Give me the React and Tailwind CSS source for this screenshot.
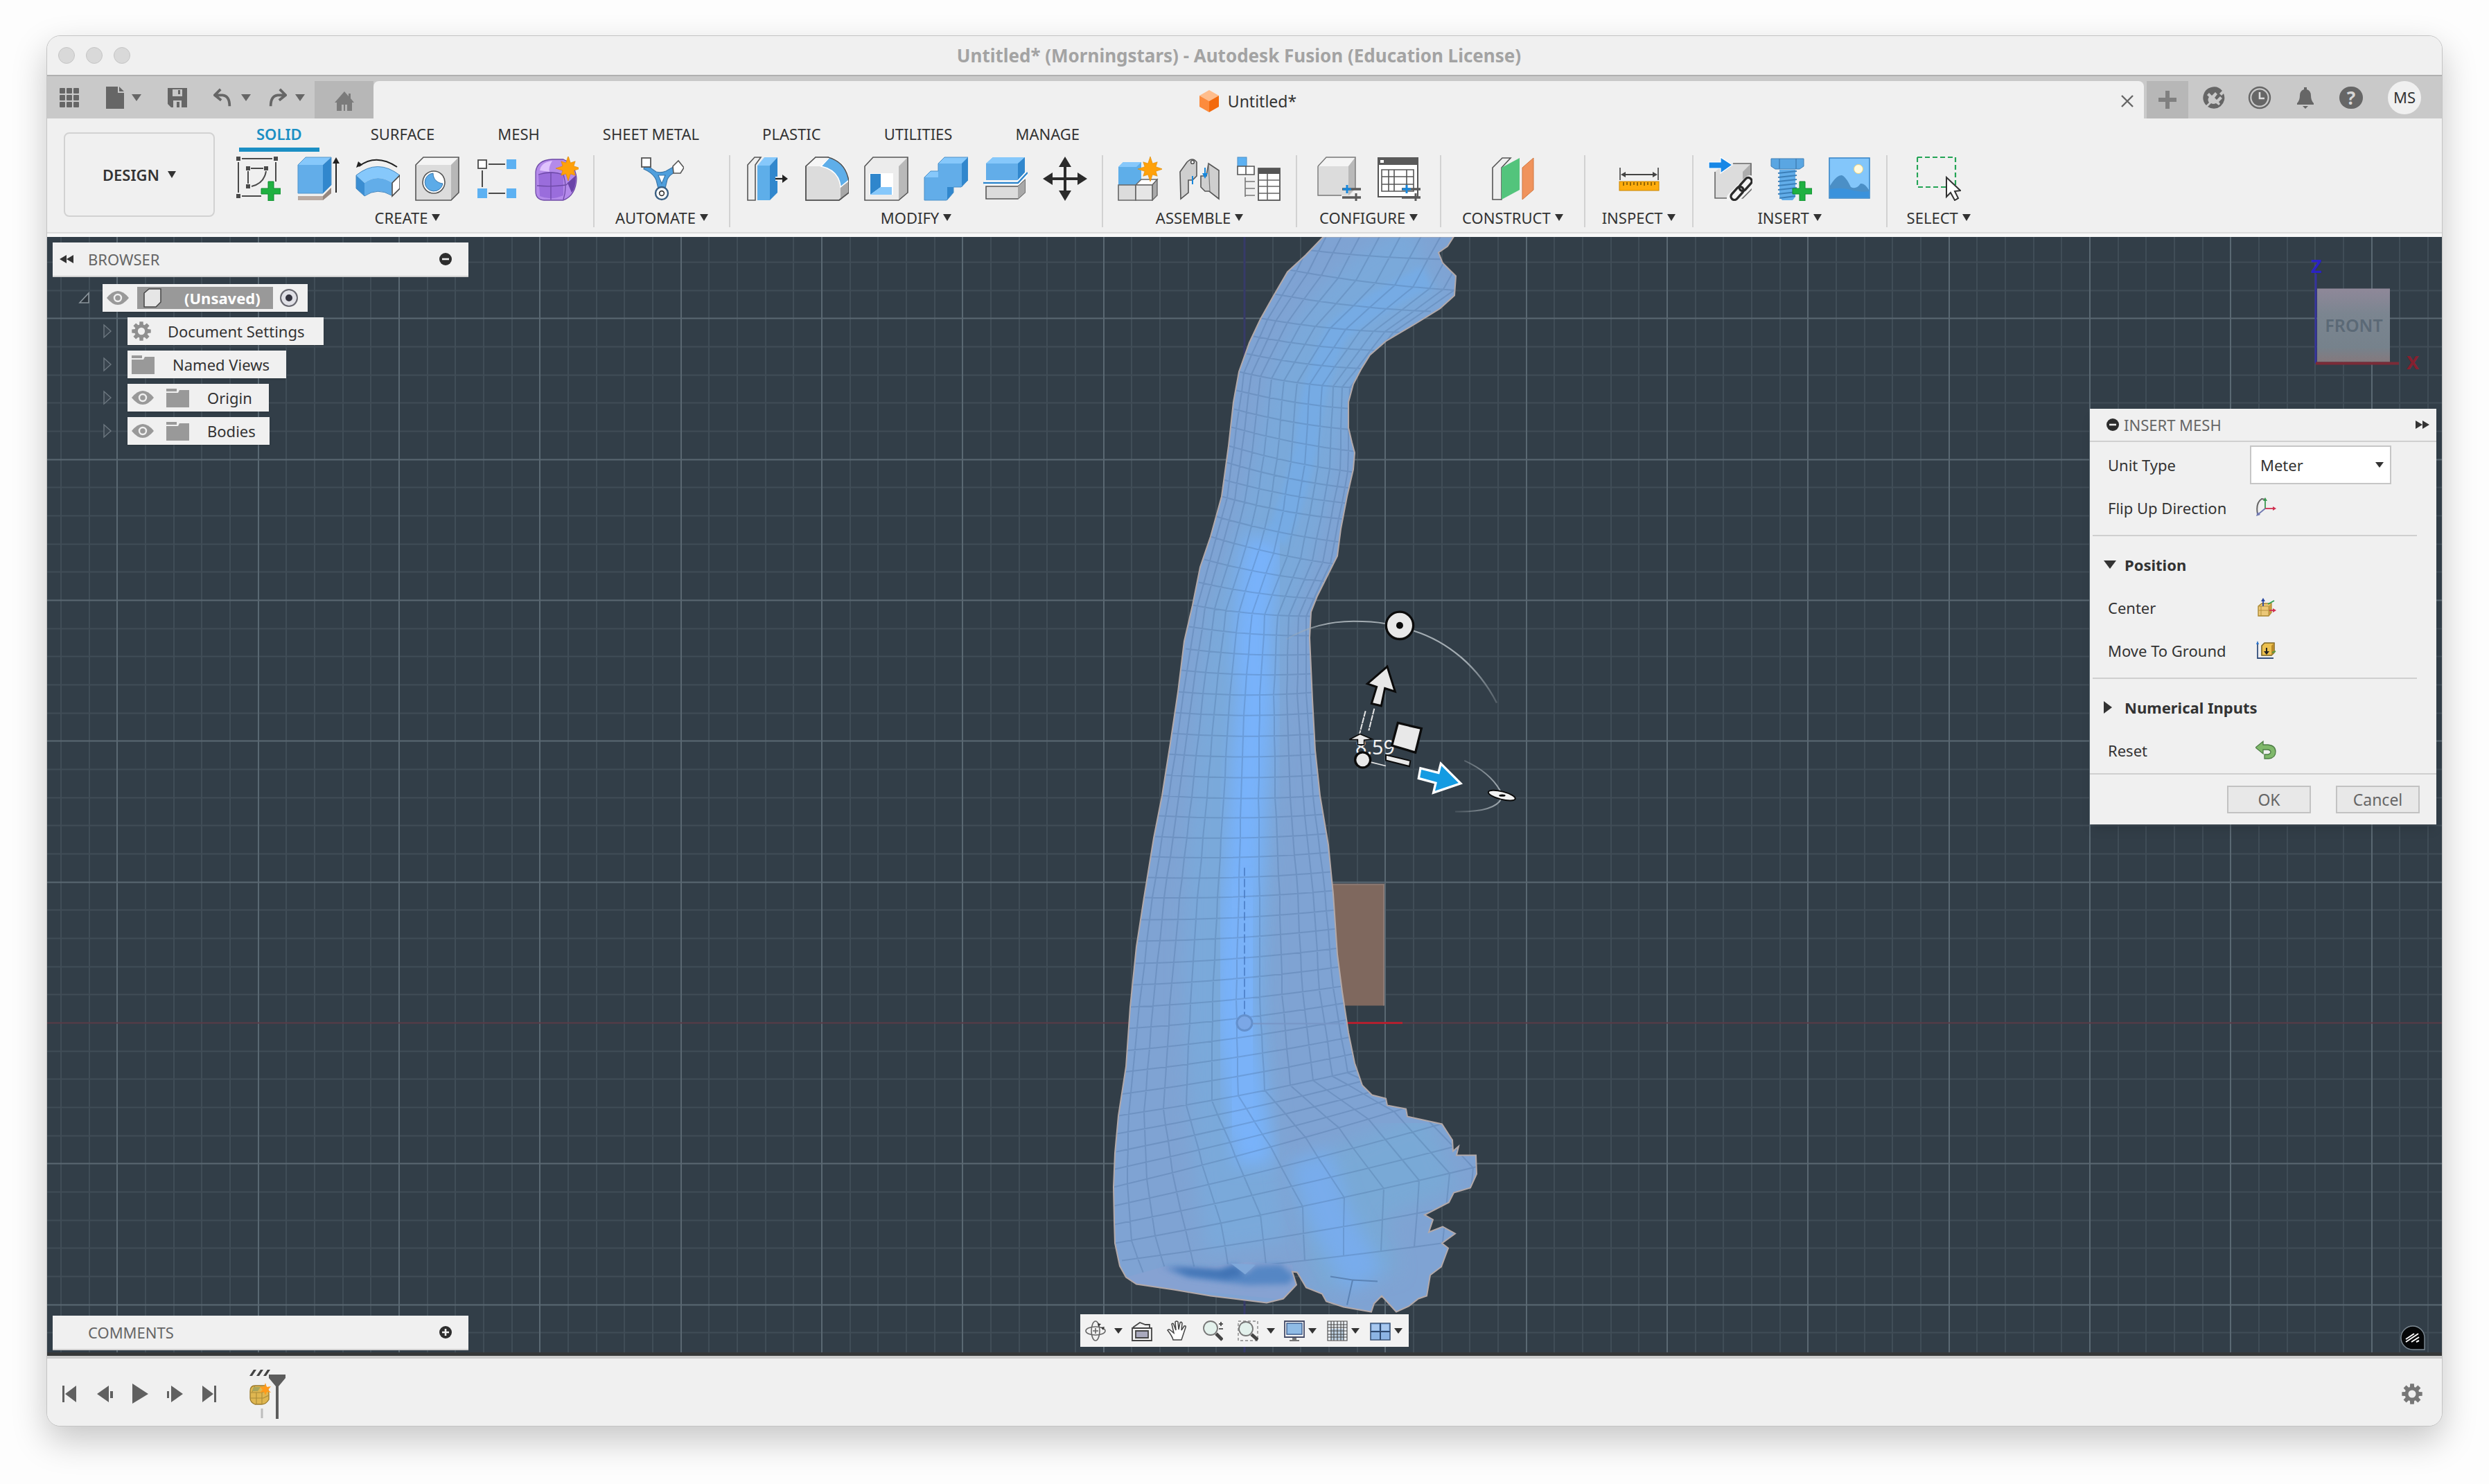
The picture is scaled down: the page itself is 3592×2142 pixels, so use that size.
import React from "react";

const INK = "#4a4a4a";

function Caret({ className = "h-[10px] w-3", fill = "#333" }) {
  return (
    <svg viewBox="0 0 12 10" preserveAspectRatio="none" className={"shrink-0 " + className} aria-hidden="true">
      <path d="M0 0H12L6 10Z" fill={fill} />
    </svg>
  );
}

function Icon({ size = 64, className = "h-16 w-16", children }) {
  return (
    <svg viewBox={`0 0 ${size} ${size}`} className={"shrink-0 " + className} fill="none" aria-hidden="true">
      {children}
    </svg>
  );
}

const dots = (pts, r = 3) =>
  pts.map(([x, y], i) => <rect key={i} x={x - r} y={y - r} width={2 * r} height={2 * r} fill={INK} />);

const star = (cx, cy, r) => {
  const pts = [];
  for (let i = 0; i < 16; i++) {
    const a = (Math.PI * i) / 8 - Math.PI / 2;
    const q = i % 2 ? r * 0.48 : i % 4 ? r * 0.8 : r;
    pts.push(`${(cx + q * Math.cos(a)).toFixed(1)},${(cy + q * Math.sin(a)).toFixed(1)}`);
  }
  return <polygon points={pts.join(" ")} fill="#ffa10a" stroke="#d98600" strokeWidth="0.6" />;
};

const plus = (cx, cy, a = 14, t = 4) => (
  <path
    d={`M${cx - t} ${cy - a}h${2 * t}v${a - t}h${a - t}v${2 * t}h${t - a}v${a - t}h${-2 * t}v${t - a}h${t - a}v${-2 * t}h${a - t}z`}
    fill="#1fb141"
    stroke="#118a30"
    strokeWidth="1"
  />
);

const sliders = (x, y) => (
  <g>
    <path d={`M${x} ${y}h28M${x} ${y + 12}h28`} stroke="#5a5a5a" strokeWidth="3.5" />
    <path d={`M${x + 7} ${y - 6}v12M${x + 1} ${y}h12`} stroke="#1787dc" strokeWidth="3" />
    <path d={`M${x + 20} ${y + 6}v12`} stroke="#5a5a5a" strokeWidth="3" />
  </g>
);

const SketchIcon = () => (
  <Icon>
    <path d="M8 3H52M3 8V52M57 8V36M8 57H36M21 17H39M17 21V39M43 21Q40 39 22 43" stroke={INK} strokeWidth="2" />
    {dots([[3, 3], [57, 3], [3, 57], [17, 17], [43, 17], [17, 43]])}
    {plus(50, 50)}
  </Icon>
);
const ExtrudeIcon = () => (
  <Icon>
    <path d="M3 57H39L51 45V53L39 63H3Z" fill="#b9aaa2" />
    <path d="M39 57L51 45V53L39 63Z" fill="#96877f" />
    <path d="M3 12H39V53H3Z" fill="#62ade9" />
    <path d="M3 12L14 1H51L39 12Z" fill="#86c8fb" />
    <path d="M39 12L51 1V41L39 53Z" fill="#3187cd" />
    <path d="M3 12L14 1H51V41L39 53H3Z" stroke="#5596cb" strokeWidth="1" />
    <path d="M58 52V8" stroke="#222" strokeWidth="2" />
    <path d="M58 1L63 10H53Z" fill="#222" />
  </Icon>
);
const RevolveIcon = () => (
  <Icon>
    <path d="M5 14Q30 -5 60 15" stroke="#222" strokeWidth="2" />
    <path d="M1 16L4 7L10 12Z" fill="#222" />
    <path d="M1 27Q32 2 64 27L53 38Q32 24 13 38Z" fill="#86c8fb" />
    <path d="M13 38Q32 24 53 38L52 56Q32 44 13 57Z" fill="#62ade9" />
    <path d="M1 27L13 38V57L1 46Z" fill="#3b8ed2" />
    <path d="M1 27Q32 2 64 27M1 27V46L13 57Q32 44 52 56" stroke="#4688bf" strokeWidth="1" />
    <path d="M53 38L64 27V46L53 57Z" fill="#fff" stroke={INK} strokeWidth="1.6" />
  </Icon>
);
const HoleIcon = () => (
  <Icon>
    <path d="M1 12L12 1H63V52L52 63H1Z" fill="#dcdcdc" />
    <path d="M1 12L12 1H63L52 12Z" fill="#f5f5f5" />
    <path d="M52 12L63 1V52L52 63Z" fill="#b7b7b7" />
    <path d="M1 12L12 1H63V52L52 63H1Z" stroke="#555" strokeWidth="1.6" />
    <circle cx="27" cy="37" r="16" fill="#fff" stroke="#555" strokeWidth="1.6" />
    <path d="M26 24C26 33 32 38 40 39A13 13 0 1 1 26 24Z" fill="#5cabe8" stroke="#3a78ac" strokeWidth="1" />
  </Icon>
);
const PatternIcon = () => (
  <Icon>
    <path d="M20 11H44M11 20V44M20 53H44" stroke={INK} strokeWidth="2" />
    <rect x="5" y="5" width="12" height="12" fill="#fff" stroke={INK} strokeWidth="1.8" />
    <rect x="46" y="4" width="14" height="14" fill="#5db1f2" />
    <rect x="4" y="46" width="14" height="14" fill="#5db1f2" />
    <rect x="46" y="46" width="14" height="14" fill="#5db1f2" />
  </Icon>
);
const FormIcon = () => (
  <Icon>
    <path d="M2 22Q4 5 26 4H42Q60 12 61 32Q60 56 42 63H14Q2 62 2 50Z" fill="#b48aea" />
    <path d="M6 26Q20 18 42 26V56Q24 64 8 57Z" fill="#9a6ddc" />
    <path d="M8 20Q10 8 26 6Q20 16 22 22Z" fill="#dfc2fd" />
    <path d="M48 38L60 28Q60 46 54 52Z" fill="#6a44a8" />
    <path d="M2 22Q4 5 26 4H42Q60 12 61 32Q60 56 42 63H14Q2 62 2 50ZM4 42Q26 44 46 41L60 28M24 23V62M6 26Q24 20 42 26Q48 44 42 62" stroke="#6d49a6" strokeWidth="1.3" />
    {star(49, 17, 18)}
  </Icon>
);
const AutomateIcon = () => (
  <Icon>
    <path d="M8 11L24 22Q31 24 38 21L52 13L58 20Q44 24 40 33L36 50H28L24 34Q20 24 6 18Z" fill="#4f9fdd" stroke="#3a77aa" strokeWidth="1.2" />
    <path d="M27 27H37L32 39Z" fill="#fff" stroke="#3a77aa" strokeWidth="1.2" />
    <rect x="3" y="2" width="13" height="13" fill="#fff" stroke="#555" strokeWidth="1.8" />
    <path d="M56 6L64 16L59 24H49L48 14Z" fill="#fff" stroke="#555" strokeWidth="1.6" />
    <circle cx="32" cy="53" r="9" fill="#fff" stroke="#3a5f82" strokeWidth="2.4" />
    <circle cx="32" cy="53" r="3.4" fill="#fff" stroke="#333" strokeWidth="1.6" />
  </Icon>
);
const PressPullIcon = () => (
  <Icon>
    <path d="M4 12L14 1H23L15 12V63H4Z" fill="#eee" stroke="#555" strokeWidth="1.6" />
    <path d="M18 13H36V63H18Z" fill="#5eaee9" />
    <path d="M18 13L28 1H47L36 13Z" fill="#86c8fb" />
    <path d="M36 13L47 1V52L36 63Z" fill="#3187cd" />
    <path d="M44 32H54" stroke="#fff" strokeWidth="6" />
    <path d="M44 32H56" stroke="#222" strokeWidth="2.4" />
    <path d="M62 32L54 26V38Z" fill="#222" />
  </Icon>
);
const FilletIcon = () => (
  <Icon>
    <path d="M2 14L16 1H34Q60 8 64 36V52L50 63H2Z" fill="#dcdcdc" stroke="#555" strokeWidth="1.6" />
    <path d="M2 14L16 1H34L24 14Z" fill="#f6f6f6" />
    <path d="M52 44L64 36V52L52 63Z" fill="#a8a8a8" />
    <path d="M24 14L36 1Q61 8 64 34L52 44Q50 20 24 14Z" fill="#5eaee9" stroke="#fff" strokeWidth="1.6" />
    <path d="M2 14L16 1H34Q60 8 64 36V52L50 63H2Z" stroke="#555" strokeWidth="1.6" />
  </Icon>
);
const ShellIcon = () => (
  <Icon>
    <path d="M1 14L13 1H63V52L50 63H1Z" fill="#ececec" />
    <path d="M50 14L63 1V52L50 63Z" fill="#b9b9b9" />
    <path d="M1 14L13 1H63V52L50 63H1Z" stroke="#555" strokeWidth="1.6" />
    <path d="M8 24H42V55H8Z" fill="#fff" />
    <path d="M9 25H24V44L9 55Z" fill="#2f86cc" />
    <path d="M24 44H40V55H9Z" fill="#86c8fb" />
  </Icon>
);
const CombineIcon = () => (
  <Icon>
    <path d="M1 30L10 21H21V10L30 1H64V34L54 44H43V52L33 63H1Z" fill="#62ade9" />
    <path d="M21 10L30 1H64L55 10Z" fill="#86c8fb" />
    <path d="M55 10L64 1V34L55 44ZM34 44H43V52L34 63Z" fill="#3187cd" />
    <path d="M1 30L10 21H21V30Z" fill="#86c8fb" />
    <path d="M1 30L10 21H21V10L30 1H64V34L54 44H43V52L33 63H1Z" stroke="#4b8fc7" strokeWidth="1" />
  </Icon>
);
const SplitIcon = () => (
  <Icon>
    <path d="M4 10L14 1H60V24L50 34H4Z" fill="#62ade9" />
    <path d="M4 10L14 1H60L50 10Z" fill="#86c8fb" />
    <path d="M50 10L60 1V24L50 34Z" fill="#3187cd" />
    <path d="M4 43H50L60 34V52L50 61H4Z" fill="#dcdcdc" stroke="#555" strokeWidth="1.6" />
    <path d="M50 43L60 34V52L50 61Z" fill="#a8a8a8" />
    <path d="M1 38H50L63 24" stroke="#fff" strokeWidth="6" />
    <path d="M0 38H50L64 23" stroke="#2f86cc" strokeWidth="2.4" />
  </Icon>
);
const MoveIcon = () => (
  <Icon>
    <path d="M32 8V56M8 32H56" stroke="#2b2b2b" strokeWidth="4" />
    <path d="M32 0L41 15H23ZM32 64L41 49H23ZM0 32L14 23V41ZM64 32L50 23V41Z" fill="#2b2b2b" />
  </Icon>
);
const ComponentIcon = () => (
  <Icon>
    <path d="M1 15L8 8H34V34L27 41H1Z" fill="#5eaee9" />
    <path d="M1 15L8 8H34L27 15Z" fill="#86c8fb" />
    <path d="M1 41H26V63H1Z" fill="#dcdcdc" stroke="#666" strokeWidth="1.6" />
    <path d="M26 41L34 33H57L50 41Z" fill="#fff" stroke="#666" strokeWidth="1.4" />
    <path d="M50 41L57 33V56L50 63Z" fill="#aaa" stroke="#666" strokeWidth="1.4" />
    <path d="M26 41H50V63H26Z" fill="#e6e6e6" stroke="#666" strokeWidth="1.6" />
    {star(47, 18, 18)}
  </Icon>
);
const JointIcon = () => (
  <Icon>
    <path d="M4 22L14 8Q22 0 28 8V28L22 34H16V52L5 61Z" fill="#cfcfcf" stroke="#555" strokeWidth="1.6" />
    <circle cx="22" cy="8" r="2.4" fill="#fff" stroke="#444" strokeWidth="1.4" />
    <path d="M45 10L60 20V61L46 50H40L34 44V28H42Z" fill="#cfcfcf" stroke="#555" strokeWidth="1.6" />
    <path d="M45 10L47 50" stroke="#777" strokeWidth="1.2" />
    <path d="M22 40V28M40 16V28" stroke="#1787dc" strokeWidth="2" />
    <path d="M40 32L36 24H44Z" fill="#1787dc" />
  </Icon>
);
const BomIcon = () => (
  <Icon>
    <rect x="1" y="1" width="13" height="13" fill="#5db1f2" stroke="#4b8fc7" />
    <path d="M1 14H25V26H1ZM13 14V26" fill="#fff" stroke="#555" strokeWidth="1.6" />
    <path d="M12 30V58M12 36H26M12 46H26M12 56H26" stroke="#777" strokeWidth="1.6" />
    <rect x="31" y="17" width="31" height="46" fill="#fff" stroke="#555" strokeWidth="1.8" />
    <path d="M31 17H62V25H31Z" fill="#555" />
    <path d="M31 34H62M31 43H62M31 53H62M44 25V63" stroke="#666" strokeWidth="1.6" />
  </Icon>
);
const ConfigureIcon = () => (
  <Icon>
    <path d="M2 14L14 1H56V46L48 56H2Z" fill="#dcdcdc" />
    <path d="M2 14L14 1H56L46 14Z" fill="#f4f4f4" />
    <path d="M46 14L56 1V46L46 56Z" fill="#b9b9b9" />
    <path d="M2 14L14 1H56V46M2 14V56H36" stroke="#777" strokeWidth="1.4" />
    {sliders(37, 47)}
  </Icon>
);
const ConfigTableIcon = () => (
  <Icon>
    <rect x="3" y="2" width="57" height="56" fill="#fff" stroke="#555" strokeWidth="2" />
    <path d="M3 1H60V12H3Z" fill="#5a5a5a" />
    <rect x="6" y="5" width="5" height="4" fill="#fff" />
    <path d="M8 19H54V50H8ZM8 29H54M8 40H54M18 19V50M26 19V50M44 19V50" stroke="#555" strokeWidth="1.6" />
    {sliders(37, 47)}
  </Icon>
);
const PlaneIcon = () => (
  <Icon>
    <path d="M3 16L17 2H29L16 16V62H3Z" fill="#efefef" stroke="#555" strokeWidth="1.6" />
    <path d="M16 16L42 2V48L16 62Z" fill="#53c47c" />
    <path d="M46 16L62 2V48L46 62Z" fill="#f0935c" stroke="#d2773f" strokeWidth="1" />
  </Icon>
);
const MeasureIcon = () => (
  <Icon>
    <path d="M5 16V34M60 16V34" stroke="#444" strokeWidth="1.6" />
    <path d="M10 26H55" stroke="#444" strokeWidth="2" />
    <path d="M6 26L13 22V30ZM59 26L52 22V30Z" fill="#444" />
    <rect x="4" y="36" width="57" height="13" fill="#ffad0d" stroke="#c98500" strokeWidth="1" />
    <path d="M10 37V42M15 37V41M20 37V42M25 37V41M30 37V42M35 37V41M40 37V42M45 37V41M50 37V42M55 37V41" stroke="#6b4a00" strokeWidth="1.4" />
  </Icon>
);
const InsertDeriveIcon = () => (
  <Icon>
    <path d="M10 22L24 10H62V48L50 60H10Z" fill="#dcdcdc" />
    <path d="M50 22L62 10V48L50 60Z" fill="#adadad" />
    <path d="M36 10H62V48L50 60H10V22" stroke="#666" strokeWidth="1.6" />
    <path d="M1 8H18V1L35 12L18 24V17H1Z" fill="#1787e6" stroke="#fff" strokeWidth="1.2" />
    <path d="M36 60L60 36" stroke="#f4f4f4" strokeWidth="18" strokeLinecap="round" />
    <rect x="31" y="48" width="22" height="10" rx="5" transform="rotate(-48 42 53)" stroke="#2b2b2b" strokeWidth="3.4" />
    <rect x="43" y="35" width="22" height="10" rx="5" transform="rotate(-48 54 40)" stroke="#2b2b2b" strokeWidth="3.4" />
  </Icon>
);
const BoltIcon = () => (
  <Icon>
    <path d="M5 3H52V14L46 18H11L5 14Z" fill="#5aa6e2" stroke="#3f7fb5" strokeWidth="1" />
    <path d="M17 3V18M41 3V18" stroke="#3f7fb5" strokeWidth="1.4" />
    <path d="M17 19H40V58L36 63H21L17 58Z" fill="#62ade9" />
    <path d="M15 24L42 21M15 30L42 27M15 36L42 33M15 42L42 39M15 48L42 45M15 54L42 51M17 60L40 57" stroke="#3b7fb9" strokeWidth="2" />
    {plus(50, 50)}
  </Icon>
);
const CanvasIcon = () => (
  <Icon>
    <rect x="3" y="2" width="58" height="58" fill="#83c6fa" stroke="#3b88c9" strokeWidth="1.6" />
    <circle cx="45" cy="18" r="6.5" fill="#fffbe0" stroke="#efd27a" />
    <path d="M4 42Q14 26 21 27Q27 29 34 44Q42 48 48 39Q54 38 60 48V59H4Z" fill="#4b8fc6" />
    <path d="M4 47Q20 44 34 48Q50 52 60 50V59H4Z" fill="#3a92dc" />
  </Icon>
);
const SelectIcon = () => (
  <Icon>
    <path d="M1 1H56V44M1 1V44H44" stroke="#23a455" strokeWidth="2.2" strokeDasharray="7 4" />
    <path d="M43 30V58L49 52L55 63L60 60L55 50L63 49Z" fill="#fff" stroke="#333" strokeWidth="2" />
  </Icon>
);

const GROUPS = [
  { name: "CREATE", pad: "px-[10px]", icons: [["Create Sketch", SketchIcon], ["Extrude", ExtrudeIcon], ["Revolve", RevolveIcon], ["Hole", HoleIcon], ["Rectangular Pattern", PatternIcon], ["Create Form", FormIcon]] },
  { name: "AUTOMATE", pad: "px-[30px]", icons: [["Automated Modeling", AutomateIcon]] },
  { name: "MODIFY", pad: "px-[10px]", icons: [["Press Pull", PressPullIcon], ["Fillet", FilletIcon], ["Shell", ShellIcon], ["Combine", CombineIcon], ["Split Body", SplitIcon], ["Move", MoveIcon]] },
  { name: "ASSEMBLE", pad: "px-[10px]", icons: [["New Component", ComponentIcon], ["Joint", JointIcon], ["Bill of Materials", BomIcon]] },
  { name: "CONFIGURE", pad: "px-[17px]", icons: [["Configure", ConfigureIcon], ["Configuration Table", ConfigTableIcon]] },
  { name: "CONSTRUCT", pad: "px-[30px]", icons: [["Offset Plane", PlaneIcon]] },
  { name: "INSPECT", pad: "px-6", icons: [["Measure", MeasureIcon]] },
  { name: "INSERT", pad: "px-[10px]", icons: [["Insert Derive", InsertDeriveIcon], ["Insert Fastener", BoltIcon], ["Canvas", CanvasIcon]] },
  { name: "SELECT", pad: "px-7", icons: [["Select", SelectIcon]] },
];

const TABS = ["SOLID", "SURFACE", "MESH", "SHEET METAL", "PLASTIC", "UTILITIES", "MANAGE"];

function TitleBar() {
  return (
    <header className="relative flex h-14 shrink-0 items-center justify-center bg-[#f0f0f0] pr-4">
      <div className="absolute left-4 flex gap-4">
        {["Close window", "Minimize window", "Zoom window"].map((n) => (
          <button key={n} aria-label={n} className="h-6 w-6 rounded-full border border-[#c4c4c4] bg-[#d9d9d9]" />
        ))}
      </div>
      <h1 className="text-[26px] font-bold text-[#a3a3a3]">Untitled* (Morningstars) - Autodesk Fusion (Education License)</h1>
    </header>
  );
}

function TabBar() {
  const c = "#666";
  const undo = "M11 2L2 11L12 19M3 11H14Q25 12 25 28";
  return (
    <div className="flex h-[63px] shrink-0 items-end border-t-2 border-[#b0b0b0] bg-[#c9c9c9]">
      <div className="flex h-full items-center pr-[14px] pl-[18px]">
        <button aria-label="Data panel" className="mr-[39px]">
          <Icon size={28} className="h-7 w-7">
            {[0, 10, 20].map((x) => [0, 10, 20].map((y) => <rect key={x + "-" + y} x={x} y={y} width="8" height="8" rx="1" fill={c} />))}
          </Icon>
        </button>
        <button aria-label="File" className="mr-[38px] flex items-center gap-[11px]">
          <svg viewBox="0 0 26 32" className="h-8 w-[26px]"><path d="M0 0H17V9H26V32H0ZM19 0L26 7H19Z" fill={c} /></svg>
          <Caret className="h-[10px] w-[14px]" fill={c} />
        </button>
        <button aria-label="Save" className="mr-[38px]">
          <Icon size={28} className="h-7 w-7">
            <path d="M0 0H28V28H5L0 23ZM7 2V12H21V2ZM8 18V28H20V18Z" fill={c} fillRule="evenodd" />
            <path d="M15 3H18V9H15ZM13 20H17V28H13Z" fill={c} />
          </Icon>
        </button>
        <div className="flex gap-6">
          <button aria-label="Undo" className="flex items-center gap-3">
            <Icon size={30} className="h-7 w-7"><path d={undo} stroke={c} strokeWidth="4" /></Icon>
            <Caret className="h-[10px] w-[14px]" fill={c} />
          </button>
          <button aria-label="Redo" className="flex items-center gap-3">
            <Icon size={30} className="h-7 w-7"><g transform="translate(30 0) scale(-1 1)"><path d={undo} stroke={c} strokeWidth="4" /></g></Icon>
            <Caret className="h-[10px] w-[14px]" fill={c} />
          </button>
        </div>
      </div>
      <button aria-label="Home" className="flex h-[54px] w-[85px] items-center justify-center bg-[#b7b7b7] pt-1">
        <Icon size={30} className="h-[30px] w-[30px]"><path d="M15 1L21 8V4H24V11L29 17H26V29H19V20H16V29H14V20H11V29H4V17H1Z" fill="#7b7b7b" /></Icon>
      </button>
      <div className="flex h-[54px] flex-1 items-center rounded-t-lg bg-[#f0f0f0] pt-1 pr-3">
        <div className="flex flex-1 items-center justify-center gap-3 pl-1">
          <svg viewBox="0 0 30 32" className="h-8 w-[30px]" aria-hidden="true">
            <path d="M15 0L29 8L15 16L1 8Z" fill="#ffbd8c" />
            <path d="M1 8L15 16V32L1 24Z" fill="#fc8b3d" />
            <path d="M29 8L15 16V32L29 24Z" fill="#f36a0e" />
          </svg>
          <span className="text-[23px] text-[#333]">Untitled*</span>
        </div>
        <button aria-label="Close tab" className="flex h-6 w-6 items-center justify-center">
          <Icon size={18} className="h-[18px] w-[18px]"><path d="M1 1L17 17M17 1L1 17" stroke="#666" strokeWidth="2.4" /></Icon>
        </button>
      </div>
      <button aria-label="New tab" className="mr-5 ml-1 flex h-[54px] w-[60px] items-center justify-center bg-[#b7b7b7]">
        <Icon size={26} className="h-[26px] w-[26px]"><path d="M13 0V26M0 13H26" stroke="#808080" strokeWidth="6" /></Icon>
      </button>
      <div className="flex h-full items-center gap-8 pr-[30px]">
        <button aria-label="Extensions">
          <Icon size={34} className="h-[34px] w-[34px]">
            <path d="M13 2A15.5 15.5 0 0 0 6 28L10 24Q7 20 10 16L7 13L10 10L14 14L19 9L22 12L18 17L21 20L26 15L29 18L24 23L26 26L24 28L20 25Q16 27 13 25L8 30A15.5 15.5 0 0 0 31 11L28 14L25 11L29 7A15.5 15.5 0 0 0 13 2Z" fill={c} />
          </Icon>
        </button>
        <button aria-label="Job status">
          <Icon size={34} className="h-[34px] w-[34px]">
            <circle cx="17" cy="17" r="15" stroke={c} strokeWidth="2.4" />
            <circle cx="17" cy="17" r="11.5" fill={c} />
            <path d="M17 9V18H24" stroke="#dcdcdc" strokeWidth="2.6" />
          </Icon>
        </button>
        <button aria-label="Notifications">
          <Icon size={34} className="h-[34px] w-[34px]"><path d="M15 2H19V5Q25 7 25 14Q25 21 29 25V27H5V25Q9 21 9 14Q9 7 15 5ZM13 29H21L17 33Z" fill={c} /></Icon>
        </button>
        <button aria-label="Help" className="flex h-8 w-[34px] items-center justify-center rounded-full bg-[#666] text-[26px] leading-none font-bold text-[#d6d6d6]">?</button>
        <button className="ml-1 flex h-12 w-12 items-center justify-center rounded-full bg-[#f0f0f0] text-[22px] text-[#333]">MS</button>
      </div>
    </div>
  );
}

function Ribbon() {
  return (
    <div className="flex shrink-0 bg-[#f0f0f0] pb-[7px]">
      <button className="mt-5 mr-[10px] ml-6 flex h-[122px] w-[218px] shrink-0 items-center justify-center gap-3 rounded-lg border-2 border-[#d2d2d2] text-[22px] font-semibold text-[#333]">
        DESIGN
        <Caret />
      </button>
      <div className="min-w-0 flex-1">
        <nav className="flex gap-[41px] pl-[25px]">
          {TABS.map((t, i) => (
            <button
              key={t}
              className={
                "flex h-12 items-center border-b-[6px] px-[25px] pt-0.5 text-[22px] whitespace-nowrap first:mr-2 " +
                (i === 0 ? "border-[#1b8fc4] font-semibold text-[#1b8fc4]" : "border-transparent text-[#333]")
              }
            >
              {t}
            </button>
          ))}
        </nav>
        <div className="mt-[5px] flex">
          {GROUPS.map((g) => (
            <section key={g.name} className={"flex h-[104px] flex-col items-center border-r-2 border-[#d2d2d2] pt-0.5 last:border-0 " + g.pad}>
              <div className="flex">
                {g.icons.map(([label, Glyph]) => (
                  <button key={label} aria-label={label} className="px-[11px]"><Glyph /></button>
                ))}
              </div>
              <button className="mt-2 flex h-8 items-center gap-1.5 text-[22px] text-[#333]">
                {g.name}
                <Caret />
              </button>
            </section>
          ))}
        </div>
      </div>
    </div>
  );
}

const OUTLINE =
  "M1910 342L1884 369L1858 393L1837 429L1819 461L1803 495L1788 537L1780 581L1773 644L1763 717L1747 775L1732 819L1721 874L1709 926L1700 999L1689 1073L1677 1149L1665 1210L1651 1296L1640 1367L1631 1454L1625 1540L1614 1611L1609 1665L1607 1714L1608 1763L1609 1795L1616 1828L1625 1844L1640 1854L1694 1862L1747 1871L1828 1881L1852 1875L1871 1855L1865 1836L1872 1837L1885 1859L1908 1868L1914 1879L1939 1887L1979 1894L1983 1882L1994 1871L2015 1894L2033 1886L2047 1875L2059 1871L2064 1841L2080 1829L2090 1802L2081 1795L2100 1781L2082 1771L2062 1779L2068 1761L2056 1754L2091 1736L2098 1722L2122 1715L2131 1695L2130 1668L2102 1668L2105 1655L2097 1662L2096 1646L2081 1623L2031 1612L2029 1601L2002 1596L2000 1586L1980 1581L1966 1567L1955 1535L1946 1491L1937 1432L1930 1378L1924 1291L1917 1220L1905 1149L1898 1083L1894 1010L1890 921L1892 884L1901 861L1930 803L1935 764L1944 717L1953 678L1955 654L1951 639L1946 618L1946 581L1953 555L1964 534L1977 513L2000 493L2044 467L2078 446L2099 427L2101 399L2082 380L2076 365L2089 356L2098 342Z";

const STATIONS = [
  [1890, 330, 2160, 330], [1860, 390, 2110, 420], [1820, 460, 2020, 480], [1788, 537, 1955, 560], [1773, 644, 1953, 682],
  [1763, 717, 1940, 750], [1747, 775, 1928, 815], [1721, 874, 1892, 890], [1700, 999, 1893, 1000], [1677, 1149, 1905, 1149],
  [1651, 1296, 1924, 1286], [1631, 1454, 1937, 1424], [1614, 1611, 1960, 1545], [1607, 1714, 2060, 1590],
  [1609, 1795, 2150, 1680], [1640, 1870, 2130, 1840],
];

function buildWires() {
  const rows = [];
  for (let i = 0; i < STATIONS.length - 1; i++) {
    const a = STATIONS[i];
    const b = STATIONS[i + 1];
    const n = Math.max(2, Math.round(Math.abs(b[1] - a[1]) / 29));
    for (let k = 0; k < n; k++) rows.push(a.map((v, j) => v + ((b[j] - v) * k) / n));
  }
  const rungs = rows.map(([x1, y1, x2, y2]) => `M${x1.toFixed(0)} ${y1.toFixed(0)}Q${((x1 + x2) / 2).toFixed(0)} ${((y1 + y2) / 2 + 8).toFixed(0)} ${x2.toFixed(0)} ${y2.toFixed(0)}`);
  const rails = [];
  const count = 12;
  for (let u = 1; u < count; u++) {
    const f = 0.6 * ((1 - Math.cos((Math.PI * u) / count)) / 2) + 0.4 * (u / count);
    rails.push("M" + rows.map(([x1, y1, x2, y2]) => `${(x1 + (x2 - x1) * f).toFixed(0)} ${(y1 + (y2 - y1) * f + 16 * f * (1 - f)).toFixed(0)}`).join("L"));
  }
  return rungs.join("") + rails.join("");
}
const WIRES = buildWires();

const GRID_X = Array.from({ length: 87 }, (_, i) => i - 43);
const GRID_Y = Array.from({ length: 41 }, (_, i) => i - 28);
const gx = (i) => Math.round(1796 + i * 40.67);
const gy = (i) => Math.round(1477 + i * 40.67);

function Scene() {
  return (
    <svg viewBox="68 342 3456 1611" preserveAspectRatio="xMidYMid slice" className="absolute inset-0 h-full w-full" role="img" aria-label="Mesh model in front view">
      <defs>
        <clipPath id="body"><path d={OUTLINE} /></clipPath>
        <filter id="soft" x="-50%" y="-20%" width="200%" height="140%"><feGaussianBlur stdDeviation="13" /></filter>
        <filter id="soft2" x="-50%" y="-50%" width="200%" height="200%"><feGaussianBlur stdDeviation="4" /></filter>
        <linearGradient id="cube" x1="0" y1="0" x2="0" y2="1">
          <stop offset="0" stopColor="#8f8899" /><stop offset="0.35" stopColor="#7b8590" /><stop offset="0.8" stopColor="#76828c" /><stop offset="1" stopColor="#85797d" />
        </linearGradient>
        <linearGradient id="ringA" gradientUnits="userSpaceOnUse" x1="50" y1="0" x2="960" y2="0">
          <stop offset="0" stopColor="#a3acb2" stopOpacity="0.2" /><stop offset="0.2" stopColor="#a3acb2" /><stop offset="0.85" stopColor="#a3acb2" /><stop offset="1" stopColor="#a3acb2" stopOpacity="0.3" />
        </linearGradient>
        <linearGradient id="ringB" gradientUnits="userSpaceOnUse" x1="760" y1="0" x2="980" y2="0">
          <stop offset="0" stopColor="#a3acb2" stopOpacity="0.1" /><stop offset="1" stopColor="#a3acb2" />
        </linearGradient>
      </defs>
      <rect x="68" y="342" width="3456" height="1611" fill="#323e48" />
      <g strokeWidth="2" stroke="#404d57">
        {GRID_X.filter((i) => i % 5).map((i) => <path key={"x" + i} d={`M${gx(i)} 342V1953`} />)}
        {GRID_Y.filter((i) => i % 5).map((i) => <path key={"y" + i} d={`M68 ${gy(i)}H3524`} />)}
      </g>
      <g strokeWidth="2" stroke="#5a6872">
        {GRID_X.filter((i) => i % 5 === 0 && i).map((i) => <path key={"X" + i} d={`M${gx(i)} 342V1953`} />)}
        {GRID_Y.filter((i) => i % 5 === 0 && i).map((i) => <path key={"Y" + i} d={`M68 ${gy(i)}H3524`} />)}
      </g>
      <path d="M68 1477H3524" stroke="#5a3b47" strokeWidth="2" />
      <path d="M1796 342V1953" stroke="#373a68" strokeWidth="3" />
      <rect x="1900" y="1277" width="97" height="175" fill="#7f685e" />
      <path d="M1900 1277H1997V1452" fill="none" stroke="#8d7a74" strokeWidth="2" />
      <path d="M1940 1477H2024" stroke="#b2202f" strokeWidth="3" />

      <path d={OUTLINE} fill="#7fa3d3" />
      <g clipPath="url(#body)">
        <path d="M2060 380Q1930 440 1890 560Q1860 740 1800 900Q1770 1200 1770 1400Q1770 1600 1800 1800" fill="none" stroke="#7aa9da" strokeWidth="120" filter="url(#soft)" />
        <path d="M2080 1660L1930 1720L1960 1850" fill="none" stroke="#79a9d6" strokeWidth="120" filter="url(#soft)" />
        <path d="M2060 400Q1960 450 1930 480Q1890 560 1886 640Q1870 720 1840 780" fill="none" stroke="#76abe4" strokeWidth="34" filter="url(#soft2)" />
        <path d="M1825 780Q1800 900 1812 1000Q1800 1150 1795 1250Q1778 1400 1785 1500Q1800 1600 1810 1680" fill="none" stroke="#78b2fb" strokeWidth="52" filter="url(#soft)" />
        <path d="M1788 1280Q1780 1460 1800 1630" fill="none" stroke="#7ab2f8" strokeWidth="96" filter="url(#soft)" />
        <path d="M1890 1670L1920 1760L1970 1850" fill="none" stroke="#78acec" strokeWidth="60" filter="url(#soft)" />
        <path d={WIRES} fill="none" stroke="#4a6d9c" strokeOpacity="0.3" strokeWidth="2" />
        <path d="M1625 1844L1682 1828L1740 1829L1800 1822L1865 1826L1868 1840L1871 1857L1850 1876L1640 1856Z" fill="#86a2d2" />
        <path d="M1676 1829L1760 1834L1782 1826L1797 1840L1812 1828L1848 1826L1868 1842L1860 1854L1800 1855L1715 1844Z" fill="#5586c4" filter="url(#soft2)" />
        <path d="M1690 1830L1760 1835L1782 1828L1797 1840L1770 1846L1715 1840Z" fill="#3f72b4" filter="url(#soft2)" />
        <path d="M1776 1824L1797 1840L1812 1826" fill="#7fa8da" />
        <path d="M1920 1843L1952 1848L1944 1884M1952 1848L1988 1850" fill="none" stroke="#5b83b5" strokeWidth="2" />
      </g>
      <path d={OUTLINE} fill="none" stroke="#b3a9a9" strokeWidth="2" />
      <path d="M1796 1253V1465" stroke="#4a7cc4" strokeOpacity="0.8" strokeWidth="2" strokeDasharray="12 4" />
      <circle cx="1796" cy="1477" r="11" fill="#7ba7e6" stroke="#6490cc" strokeWidth="3" />
      <path d="M1808 1478H1940" stroke="#7795c6" strokeWidth="2" />

      <g transform="translate(1840 860) scale(0.3333)">
        <path d="M50 190Q180 112 340 112Q420 112 480 122" fill="none" stroke="url(#ringA)" strokeWidth="6" />
        <path d="M600 153C750 200 880 310 960 465" fill="none" stroke="url(#ringA)" strokeWidth="7" />
        <path d="M820 715Q930 765 975 845M980 880Q950 940 780 936" fill="none" stroke="url(#ringB)" strokeWidth="6" />
        <path d="M392 500L366 600M430 490L406 585" stroke="#e6e6e6" strokeWidth="6" strokeDasharray="26 3" />
        <path d="M415 722L480 738" stroke="#e6e6e6" strokeWidth="5" />
        <text x="348" y="688" fontSize="86" fill="#f2f2f2" fontFamily="Noto Sans, sans-serif">8.59</text>
        <circle cx="540" cy="130" r="59" fill="#e8e8e8" stroke="#0b0b0b" strokeWidth="10" />
        <circle cx="540" cy="130" r="15" fill="#0b0b0b" />
        <path d="M486 308L520 416L476 402L460 478L418 468L440 396L400 382Z" fill="#e8e8e8" stroke="#0b0b0b" strokeWidth="9" />
        <path d="M322 624L368 600L420 622L386 626V646H358V624Z" fill="#e8e8e8" stroke="#0b0b0b" strokeWidth="5" />
        <path d="M532 552L634 576L608 680L506 650Z" fill="#e8e8e8" stroke="#0b0b0b" strokeWidth="10" />
        <path d="M480 690L586 716L582 740L480 714Z" fill="#e8e8e8" stroke="#0b0b0b" strokeWidth="6" />
        <circle cx="380" cy="712" r="33" fill="#e8e8e8" stroke="#0b0b0b" strokeWidth="10" />
        <path d="M630 748L708 768L718 728L804 814L686 854L696 812L622 792Z" fill="#149be2" stroke="#fff" strokeWidth="10" />
        <ellipse cx="982" cy="866" rx="60" ry="17" transform="rotate(14 982 866)" fill="#f2f2f2" stroke="#0b0b0b" strokeWidth="6" />
        <ellipse cx="984" cy="866" rx="14" ry="5" fill="#0b0b0b" />
      </g>

      <g fontFamily="Noto Sans, sans-serif" fontWeight="700" textAnchor="middle">
        <rect x="3344" y="417" width="105" height="106" fill="url(#cube)" />
        <text x="3397" y="479" fontSize="25" fontWeight="600" fill="#5b6976">FRONT</text>
        <path d="M3342 396V525" stroke="#35339c" strokeWidth="3" />
        <path d="M3342 525H3462" stroke="#7b2b37" strokeWidth="4" />
        <text x="3343" y="394" fontSize="27" fill="#2a22c4">Z</text>
        <text x="3482" y="533" fontSize="27" fill="#86202f">X</text>
      </g>
    </svg>
  );
}

const Eye = () => (
  <svg viewBox="0 0 32 20" className="h-5 w-8 shrink-0" aria-hidden="true">
    <path d="M0 10Q16 -10 32 10Q16 30 0 10Z" fill="#999" />
    <circle cx="16" cy="10" r="5" fill="none" stroke="#f0f0f0" strokeWidth="2.4" />
  </svg>
);
const Folder = () => (
  <svg viewBox="0 0 33 27" className="h-[27px] w-[33px] shrink-0" aria-hidden="true">
    <path d="M0 0H15V4H0ZM0 6H17L19 2H33V27H0Z" fill="#999" />
  </svg>
);
const gearPath = (() => {
  let d = "";
  for (let i = 0; i < 8; i++) {
    const a = (i * Math.PI) / 4;
    [[10.5, -0.3], [15, -0.19], [15, 0.19], [10.5, 0.3]].forEach(([r, o], k) => {
      d += `${i + k === 0 ? "M" : "L"}${(15 + r * Math.cos(a + o)).toFixed(1)} ${(15 + r * Math.sin(a + o)).toFixed(1)}`;
    });
  }
  return d + "ZM15 9.5A5.5 5.5 0 1 0 15 20.5A5.5 5.5 0 1 0 15 9.5Z";
})();
const Gear = ({ fill = "#8f8f8f", className = "h-7 w-7" }) => (
  <Icon size={30} className={className}><path d={gearPath} fill={fill} fillRule="evenodd" /></Icon>
);
const Twisty = () => (
  <Icon size={18} className="h-[22px] w-[18px]"><path d="M4 0L14 9L4 18Z" fill="#39444e" stroke="#6d7880" strokeWidth="1.4" /></Icon>
);
const RoundSign = ({ open }) => (
  <Icon size={20} className="h-5 w-5">
    <circle cx="10" cy="10" r="9" fill="#2d2d2d" />
    <path d={open ? "M5 10H15" : "M5 10H15M10 5V15"} stroke="#f0f0f0" strokeWidth="2.6" />
  </Icon>
);
const DoubleArrow = ({ flip }) => (
  <svg viewBox="0 0 20 12" className="h-3 w-5" aria-hidden="true">
    <path d={flip ? "M0 0L10 6L0 12ZM10 0L20 6L10 12Z" : "M20 0L10 6L20 12ZM10 0L0 6L10 12Z"} fill="#333" />
  </svg>
);

const NODES = [
  { name: "Document Settings", gear: true, pad: "pr-7" },
  { name: "Named Views", pad: "pr-6" },
  { name: "Origin", eye: true, pad: "pr-6" },
  { name: "Bodies", eye: true, pad: "pr-5" },
];

function Browser() {
  const row = "flex h-10 items-center bg-[#f0f0f0] text-[22px] text-[#333] shadow";
  return (
    <aside className="absolute top-2 left-2 w-[600px]">
      <div className="flex h-[50px] items-center border-b-2 border-[#d0d0d0] bg-[#f0f0f0] pr-[23px] pl-[10px] text-[22px] text-[#666]">
        <button aria-label="Collapse browser"><DoubleArrow /></button>
        <h2 className="ml-[21px] flex-1">BROWSER</h2>
        <button aria-label="Minimize browser"><RoundSign open /></button>
      </div>
      <ul className="mt-[10px] flex flex-col items-start gap-2">
        <li className="flex items-center gap-[18px] pl-9">
          <Icon size={18} className="h-[18px] w-[18px]"><path d="M16 2V16H3Z" fill="#2a333b" stroke="#8b959c" strokeWidth="1.6" /></Icon>
          <div className={row + " pr-[14px] pl-1.5"}>
            <Eye />
            <button className="ml-3 flex h-8 items-center gap-8 bg-[#999] pr-[18px] pl-2 font-bold text-white">
              <Icon size={28} className="h-7 w-7">
                <path d="M2 7L9 1H26V20L19 27H2Z" fill="#e6e6e6" stroke="#444" strokeWidth="1.5" />
              </Icon>
              (Unsaved)
            </button>
            <input type="radio" defaultChecked aria-label="Activate (Unsaved)" className="ml-2.5 h-[26px] w-[26px] appearance-none rounded-full border-2 border-[#6a6a72] bg-[#33333f] shadow-[inset_0_0_0_6px_#e0e0e6]" />
          </div>
        </li>
        {NODES.map(({ name, eye, gear, pad }) => (
          <li key={name} className="flex items-center gap-5 pl-[70px]">
            <Twisty />
            <div className={row + " pl-1.5 " + pad}>
              {eye && <span className="mr-[18px]"><Eye /></span>}
              {gear ? <Gear /> : <Folder />}
              <span className={gear ? "ml-6" : "ml-[26px]"}>{name}</span>
            </div>
          </li>
        ))}
      </ul>
    </aside>
  );
}

const FlipIcon = () => (
  <Icon size={30} className="h-[30px] w-[30px]">
    <path d="M14 16V3" stroke="#3a9a50" strokeWidth="1.8" /><path d="M14 16H28" stroke="#d03050" strokeWidth="1.8" /><path d="M14 16L3 25" stroke="#7078b0" strokeWidth="1.8" />
    <path d="M3 24Q0 8 9 2L14 3" stroke="#666" strokeWidth="2" /><path d="M30 16L25 13V19Z" fill="#d03050" /><path d="M14 0L17 5H11Z" fill="#3a9a50" /><path d="M1 27L3 21L7 25Z" fill="#7078b0" />
  </Icon>
);
const CenterIcon = () => (
  <Icon size={30} className="h-[30px] w-[30px]">
    <path d="M4 13L9 9H23V22L19 27H4Z" fill="#ecc878" stroke="#a8842c" strokeWidth="1.3" /><path d="M19 13L23 9V22L19 27Z" fill="#c99a3e" />
    <path d="M4 13H19V27M8 13V27M4 19H19" stroke="#b3903c" strokeWidth="1" />
    <path d="M11 13V4" stroke="#2846a0" strokeWidth="1.8" /><path d="M11 1L14 6H8Z" fill="#2846a0" />
    <path d="M18 10L27 5" stroke="#2fa050" strokeWidth="1.8" /><path d="M20 19H27" stroke="#d03050" strokeWidth="1.8" /><path d="M30 19L25 16V22Z" fill="#d03050" />
  </Icon>
);
const GroundIcon = () => (
  <Icon size={30} className="h-[30px] w-[30px]">
    <path d="M3 4V26H26" stroke="#35507c" strokeWidth="1.8" /><path d="M3 1L5 6H1Z" fill="#2670c8" />
    <path d="M9 8L13 4H27V18L23 22H9Z" fill="#ecc04e" stroke="#7c6420" strokeWidth="1.6" /><path d="M23 8L27 4V18L23 22Z" fill="#b98a2a" />
    <path d="M16 11V18" stroke="#222" strokeWidth="2" /><path d="M12 16H20L16 21Z" fill="#222" /><path d="M24 18L29 16" stroke="#5a9a40" strokeWidth="2" />
  </Icon>
);
const ResetIcon = () => (
  <Icon size={30} className="h-[30px] w-[30px]">
    <path d="M0 11L11 2V7H18Q29 8 29 17Q29 26 19 27H13V21H18Q22 20 22 17Q21 14 17 14H11V20Z" fill="#7fb86a" stroke="#4d7d45" strokeWidth="1.3" />
  </Icon>
);

function InsertMesh() {
  const row = "flex h-[62px] items-center pl-[26px]";
  const lab = "w-[205px]";
  const btn = "h-10 w-[121px] border-2 border-[#c2c2c2] bg-[#e8e8e8] text-[23px] leading-none text-[#666]";
  return (
    <form onSubmit={(e) => e.preventDefault()} className="absolute top-[248px] right-2 w-[500px] bg-[#f0f0f0] text-[22px] text-[#333] shadow-lg">
      <div className="flex h-12 items-center border-b-2 border-[#cfcfcf] pr-[10px] pl-[23px] text-[#666]">
        <button type="button" aria-label="Minimize dialog"><RoundSign open /></button>
        <h2 className="ml-1.5 flex-1">INSERT MESH</h2>
        <button type="button" aria-label="Expand dialog"><DoubleArrow flip /></button>
      </div>
      <div className={row + " mt-0.5"}>
        <label htmlFor="unit" className={lab}>Unit Type</label>
        <div className="relative">
          <select id="unit" defaultValue="Meter" className="h-[56px] w-[204px] appearance-none border-2 border-[#c6c6c6] bg-white pl-[13px] text-[22px]">
            <option>Meter</option>
          </select>
          <span className="pointer-events-none absolute top-6 right-[11px]"><Caret className="block h-2 w-3" /></span>
        </div>
      </div>
      <div className={row}>
        <span id="flip" className={lab}>Flip Up Direction</span>
        <button type="button" aria-labelledby="flip" className="ml-2"><FlipIcon /></button>
      </div>
      <hr className="mt-2 mr-7 ml-1 border-t-2 border-[#cfcfcf]" />
      <button type="button" className="mt-[10px] flex h-[62px] items-center pl-5 font-bold">
        <span className="w-[30px]"><Caret className="h-3 w-[18px]" /></span>
        Position
      </button>
      <div className={row}>
        <span id="center" className={lab}>Center</span>
        <button type="button" aria-labelledby="center" className="ml-2"><CenterIcon /></button>
      </div>
      <div className={row}>
        <span id="ground" className={lab}>Move To Ground</span>
        <button type="button" aria-labelledby="ground" className="ml-2"><GroundIcon /></button>
      </div>
      <hr className="mt-2 mr-7 ml-1 border-t-2 border-[#cfcfcf]" />
      <button type="button" className="mt-[10px] flex h-[62px] items-center pl-5 font-bold">
        <span className="w-[30px]"><svg viewBox="0 0 12 18" className="h-[18px] w-3"><path d="M0 0L12 9L0 18Z" fill="#333" /></svg></span>
        Numerical Inputs
      </button>
      <div className={row}>
        <span id="reset" className={lab}>Reset</span>
        <button type="button" aria-labelledby="reset" className="ml-2"><ResetIcon /></button>
      </div>
      <div className="mt-0.5 flex h-[74px] justify-end gap-9 border-t-2 border-[#cfcfcf] pt-4 pr-6">
        <button type="submit" className={btn}>OK</button>
        <button type="button" className={btn}>Cancel</button>
      </div>
    </form>
  );
}

const NAV = [
  ["Orbit", "gap-3", (
    <g stroke="#666" strokeWidth="1.6"><ellipse cx="15" cy="15" rx="14" ry="6" /><ellipse cx="15" cy="15" rx="6" ry="14" /><path d="M15 11V19M11 15H19" /><path d="M18 4L23 5L19 9ZM23 10L28 9L26 14Z" fill="#333" stroke="none" /></g>
  ), ""],
  ["Look At", null, (
    <g stroke="#444" strokeWidth="1.8"><path d="M1 11H29V29H1Z" /><path d="M6 15H24V25H6Z" fill="#a9a9bd" /><path d="M2 10L12 3L20 6L26 6V10" /></g>
  ), ""],
  ["Pan", null, (
    <path d="M9 28Q8 23 1 14Q3 12 5 14L10 18L7 5Q9 3 10 6L13 14L12 2Q14 0 16 2L17 13L19 3Q21 1 22 4L21 14L25 8Q28 7 27 10L24 19L21 28Z" fill="#fff" stroke="#444" strokeWidth="1.5" />
  ), "ml-2"],
  ["Zoom", null, (
    <g><circle cx="12" cy="11" r="10" fill="#e3f1ec" stroke="#777" strokeWidth="1.8" /><path d="M20 19L29 28" stroke="#444" strokeWidth="5" /><path d="M24 5H30M27 2V8M24 12H30" stroke="#333" strokeWidth="1.6" /></g>
  ), "ml-2"],
  ["Fit", "gap-3", (
    <g><path d="M1 1H29V29H1Z" stroke="#888" strokeWidth="1.4" strokeDasharray="4 3" /><circle cx="12" cy="12" r="10" fill="#e3f1ec" stroke="#777" strokeWidth="1.8" /><path d="M20 20L29 28" stroke="#444" strokeWidth="5" /></g>
  ), "ml-2"],
  ["Display Settings", "gap-[5px]", (
    <g><path d="M1 1H29V24H1Z" fill="#f6f6f6" stroke="#444a66" strokeWidth="1.8" /><path d="M4 4H26V20H4Z" fill="#8fbbe6" stroke="#3f5f90" strokeWidth="1.4" /><path d="M12 25H18V28H22V30H8V28H12Z" fill="#777" /></g>
  ), ""],
  ["Grid and Snaps", "gap-[5px]", (
    <g><path d="M1 1H29V29H1Z" fill="#eef2f6" /><path d="M5 12H25V28H5Z" fill="#bcd0e2" /><path d="M1 1H29V29H1ZM1 6H29M1 10H29M1 15H29M1 20H29M1 24H29M6 1V29M10 1V29M15 1V29M20 1V29M24 1V29" stroke="#444" strokeWidth="1.1" /></g>
  ), "ml-0.5"],
  ["Viewports", "gap-[5px]", (
    <g><path d="M1 4H29V28H1Z" fill="#8cb4e4" stroke="#3c5578" strokeWidth="1.6" /><path d="M15 4V28M1 16H29" stroke="#2f4a70" strokeWidth="2" /><path d="M3 6H13V14H3ZM17 6H27V14H17Z" fill="#a8c8ee" /></g>
  ), "ml-0.5"],
];

function NavBar() {
  return (
    <div className="absolute right-0 bottom-2 left-0 flex justify-center">
      <div className="flex h-[47px] items-center gap-[13px] bg-[#f2f2f2] pr-[9px] pl-[7px]">
        {NAV.map(([label, gap, art, extra]) => (
          <button key={label} aria-label={label} className={"flex items-center " + (gap || "") + " " + extra}>
            <Icon size={30} className="h-[30px] w-[30px]">{art}</Icon>
            {gap && <Caret className="h-2 w-3" />}
          </button>
        ))}
      </div>
    </div>
  );
}

function Timeline() {
  const f = "#606060";
  const items = [
    ["Go to start", "M0 3H3V27H0ZM20 3V27L4 15Z"],
    ["Step back", "M17 3V27L0 15ZM19 11H23V21H19Z"],
    ["Play", "M1 0L24 15L1 29Z"],
    ["Step forward", "M1 11H4V21H1ZM7 3L24 15L7 27Z"],
    ["Go to end", "M2 3L18 15L2 27ZM19 3H22V27H19Z"],
  ];
  return (
    <footer className="flex h-[101px] shrink-0 items-center border-t-4 border-[#cfcfcf] bg-[#f0f0f0] pt-1 pr-7 pl-[22px]">
      <div className="flex gap-[26px]">
        {items.map(([n, d]) => (
          <button key={n} aria-label={n}><svg viewBox="0 0 24 30" className="h-[30px] w-6"><path d={d} fill={f} /></svg></button>
        ))}
      </div>
      <button aria-label="Mesh insert feature" className="ml-[46px] flex-none">
        <svg viewBox="0 0 52 72" className="h-[72px] w-[52px]">
          <path d="M0 10L6 1H10L4 10ZM10 10L16 1H20L14 10ZM20 10L26 1H30L24 10Z" fill="#444" />
          <path d="M1 32Q1 24 8 24H22Q28 28 28 36V44Q24 51 18 51H8Q1 48 1 42Z" fill="#dfb650" stroke="#9a7a2c" strokeWidth="1.3" />
          <path d="M2 34H18L27 30M10 34V51M18 34V51M2 42H20L28 38M8 24L4 33" stroke="#a98a38" strokeWidth="1.1" fill="none" />
          <path d="M6 26H16L12 32H4Z" fill="#a9a45a" />
          <path d="M23 20L25 26L31 25L27 30L31 34L25 33L23 38L21 33L15 34L19 30L15 25L21 26Z" fill="#ff9a1a" />
          <path d="M18 57V71" stroke="#bdbdbd" strokeWidth="3" />
          <path d="M28 8H52V13L42 25V72H38V25L28 13Z" fill="#5c5c5c" />
        </svg>
      </button>
      <div className="flex-1" />
      <button aria-label="Timeline settings"><Gear fill="#777" className="h-[30px] w-[30px]" /></button>
    </footer>
  );
}

export default function App() {
  return (
    <div className="flex h-screen min-h-[1400px] bg-[#fdfdfd] px-[67px] pt-[51px] pb-[83px] font-['Noto_Sans','Open_Sans',sans-serif]">
      <div className="flex min-w-0 flex-1 flex-col overflow-hidden rounded-[20px] border border-[#c4c4c4] bg-[#f0f0f0] shadow-[0_20px_50px_rgba(0,0,0,0.22)]">
        <TitleBar />
        <TabBar />
        <Ribbon />
        <div className="h-[7px] shrink-0 border-t-2 border-[#dcdcdc] bg-[#f8f8f8]" />
        <main className="relative flex-1 overflow-hidden border-b-[5px] border-[#363839] bg-[#323e48]">
          <Scene />
          <Browser />
          <InsertMesh />
          <section className="absolute bottom-[3px] left-2 flex h-[50px] w-[600px] items-center border-b-2 border-[#d0d0d0] bg-[#f0f0f0] pr-[23px] pl-[51px] text-[22px] text-[#666]">
            <h2 className="flex-1">COMMENTS</h2>
            <button aria-label="Expand comments"><RoundSign /></button>
          </section>
          <NavBar />
          <button aria-label="Autodesk assistant" className="absolute right-6 bottom-[3px]">
            <Icon size={36} className="h-9 w-9">
              <path d="M18 1A17 17 0 0 0 18 35H35V18A17 17 0 0 0 18 1Z" fill="#050708" stroke="#7d8a94" strokeWidth="1.4" />
              <path d="M8 20L20 12M8 24L26 12M16 24L27 17M23 24L27 22" stroke="#fff" strokeWidth="2" />
            </Icon>
          </button>
        </main>
        <Timeline />
      </div>
    </div>
  );
}
